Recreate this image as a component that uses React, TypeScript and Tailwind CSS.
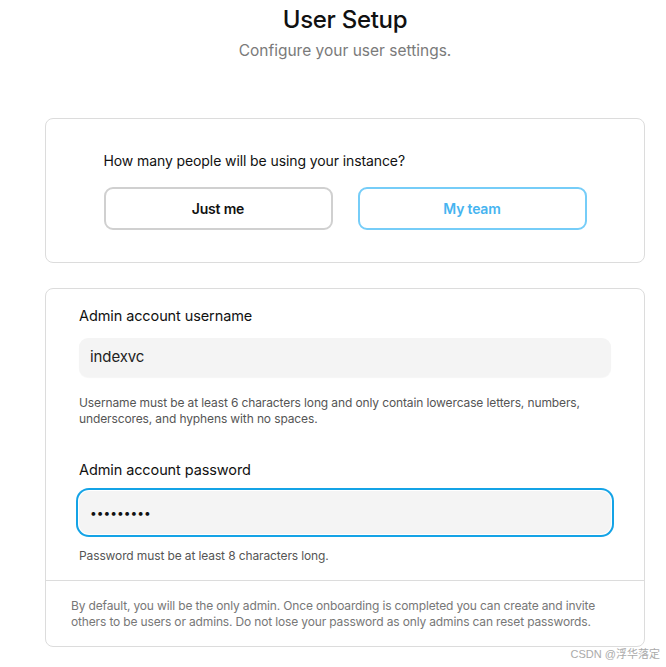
import React from "react";

export default function App() {
  return (
    <div
      className="relative w-[666px] h-[667px] bg-white overflow-hidden"
      style={{ fontFamily: "Inter, 'Noto Sans', sans-serif" }}
    >
      <div className="ml-[45px] w-[600px] flex flex-col">
        <div className="flex flex-col items-center pt-[4px]">
          <h1 className="text-[24px] leading-[32px] font-medium text-[#111] tracking-[-0.3px]">
            User Setup
          </h1>
          <p className="mt-[3px] text-[15.5px] leading-[24px] text-[#7a7a7a] tracking-[0px]">
            Configure your user settings.
          </p>
        </div>

        <div className="mt-[55px] border border-[#dcdcdc] rounded-[8px] pt-[32px] pb-[32px] flex flex-col items-center">
          <div className="w-[483px] flex flex-col">
            <p className="text-[14px] leading-[20px] text-[#111] tracking-[-0.1px]">
              How many people will be using your instance?
            </p>
            <div className="mt-[16px] flex gap-[25px]">
              <button className="w-[229px] h-[43px] rounded-[9px] border-2 border-[#d0d0d0] bg-white text-[14px] font-semibold text-[#111] tracking-[-0.2px]">
                Just me
              </button>
              <button className="w-[229px] h-[43px] rounded-[9px] border-2 border-[#76cdf8] bg-white text-[14px] font-semibold text-[#46b4f0] tracking-[-0.2px]">
                My team
              </button>
            </div>
          </div>
        </div>

        <div className="mt-[25px] border border-[#dcdcdc] rounded-[8px] flex flex-col">
          <div className="px-[33px] pt-[17px] pb-[16px] flex flex-col">
            <label className="text-[14.5px] leading-[20px] text-[#111] tracking-[-0.1px]">
              Admin account username
            </label>
            <div className="mt-[12px] h-[39px] rounded-[9px] bg-[#f4f4f4] flex items-center px-[11px] text-[15px] text-[#222] tracking-[-0.1px] shadow-[0_1px_1px_rgba(0,0,0,0.04)]">
              indexvc
            </div>
            <p className="mt-[18px] text-[12px] leading-[16px] text-[#555] tracking-[-0.12px]">
              Username must be at least 6 characters long and only contain lowercase letters, numbers,
              underscores, and hyphens with no spaces.
            </p>
            <label className="mt-[33px] text-[14.5px] leading-[20px] text-[#111] tracking-[-0.1px]">
              Admin account password
            </label>
            <div className="mt-[11px] h-[43px] rounded-[10px] bg-[#f4f4f4] flex items-center px-[11px] ring-2 ring-[#14a3e6] ring-offset-1 ring-offset-white text-[12px] text-[#111] tracking-[0px]">
              •••••••••
            </div>
            <p className="mt-[14px] text-[12px] leading-[16px] text-[#555] tracking-[-0.12px]">
              Password must be at least 8 characters long.
            </p>
          </div>
          <div className="border-t border-[#dcdcdc] px-[25px] pt-[17px] pb-[16px]">
            <p className="text-[12px] leading-[16px] text-[#777] tracking-[-0.15px]">
              By default, you will be the only admin. Once onboarding is completed you can create and invite
              others to be users or admins. Do not lose your password as only admins can reset passwords.
            </p>
          </div>
        </div>
      </div>

      <div
        className="absolute right-[6px] bottom-[6px] text-[11px] leading-[14px] text-[#aaa]"
        style={{ fontFamily: "'Liberation Sans', 'Noto Sans CJK SC', sans-serif" }}
      >
        CSDN @浮华落定
      </div>
    </div>
  );
}
